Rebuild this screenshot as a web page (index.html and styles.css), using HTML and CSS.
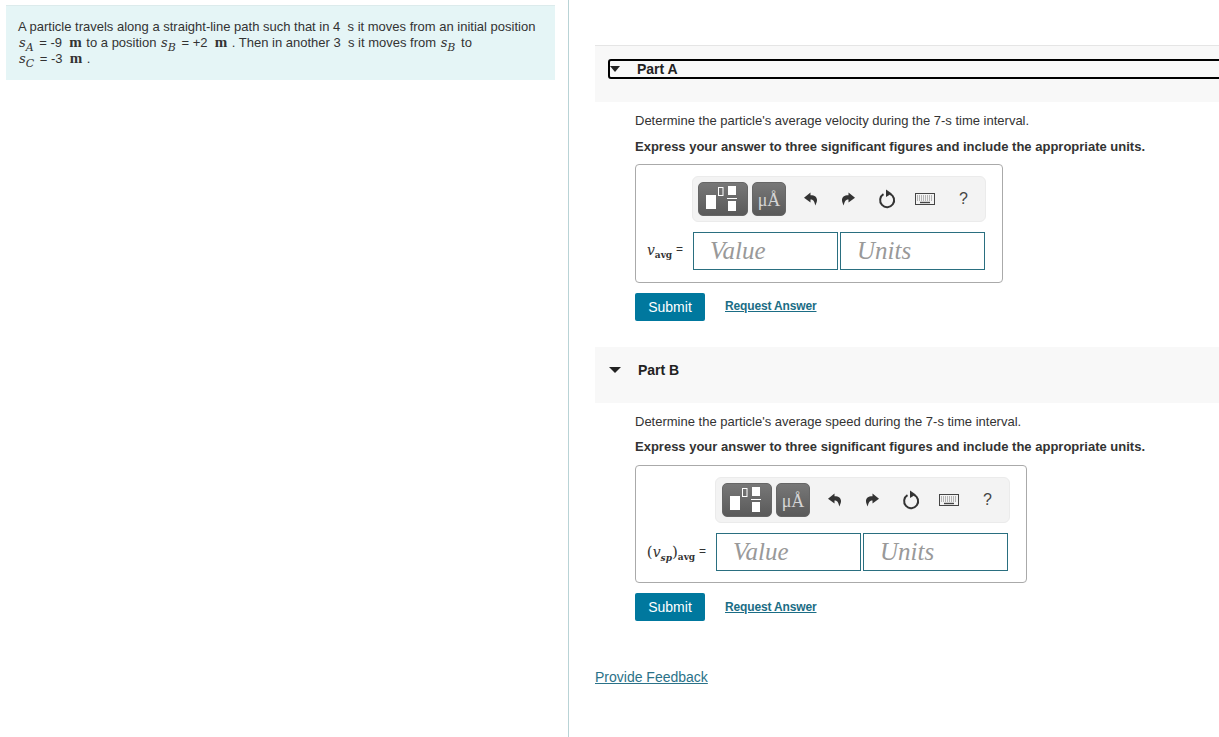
FILE: index.html
```html
<!DOCTYPE html>
<html lang="en">
<head>
    <meta charset="UTF-8">
    <meta name="viewport" content="width=device-width, initial-scale=1.0">
    <title>Particle velocity problem</title>
    <link rel="stylesheet" href="styles.css">
</head>
<body>
    <svg class="icon-defs" width="0" height="0">
        <symbol id="icon-undo" viewBox="0 0 14 14">
            <path d="M6.5 0.5 L0 5.8 L6.5 10.5 L6.5 7.6 C9 7.6 10.6 9.2 11.2 13.5 C14.5 8 13.5 3.2 6.5 3.2 Z" fill="#333"/>
        </symbol>
        <symbol id="icon-redo" viewBox="0 0 14 14">
            <path d="M7.5 0.5 L14 5.8 L7.5 10.5 L7.5 7.6 C5 7.6 3.4 9.2 2.8 13.5 C-0.5 8 0.5 3.2 7.5 3.2 Z" fill="#333"/>
        </symbol>
        <symbol id="icon-reset" viewBox="0 0 18 20">
            <path d="M5.5 5.2 A7 7 0 1 0 12 4.8" fill="none" stroke="#333" stroke-width="2"/>
            <path d="M8 0.5 L13.8 4.4 L8 8 Z" fill="#333"/>
        </symbol>
        <symbol id="icon-keyboard" viewBox="0 0 20 12">
            <rect x="0.5" y="0.5" width="19" height="11" fill="#f3f3f3" stroke="#444"/>
            <path d="M2 3 H18 M2 5 H18 M2 7 H18" stroke="#777" stroke-dasharray="1 1"/>
            <path d="M5 9.5 H15" stroke="#444" stroke-width="1.4"/>
        </symbol>
        <symbol id="icon-templates" viewBox="0 0 50 34">
            <rect x="8" y="13" width="10" height="14" fill="#fff"/>
            <rect x="20.5" y="5.5" width="4.5" height="8" fill="none" stroke="#fff"/>
            <rect x="30" y="4" width="8" height="9" fill="#fff"/>
            <rect x="29" y="16" width="10" height="1" fill="#fff"/>
            <rect x="30" y="19" width="8" height="10" fill="#fff"/>
        </symbol>
    </svg>

    <div class="layout">
        <div class="left-pane">
            <div class="problem">
                A particle travels along a straight-line path such that in 4 &nbsp;s it moves from an initial position<br>
                <span class="var">s<sub>A</sub></span> = -9 &nbsp;<span class="unit">m</span> to a position <span class="var">s<sub>B</sub></span> = +2 &nbsp;<span class="unit">m</span> . Then in another 3 &nbsp;s it moves from <span class="var">s<sub>B</sub></span> to<br>
                <span class="var">s<sub>C</sub></span> = -3 &nbsp;<span class="unit">m</span> .
            </div>
        </div>

        <div class="right-pane">
            <div class="part-header part-header-first">
                <div class="part-toggle part-toggle-focus">
                    <span class="arrow"></span>
                    <span class="part-title">Part A</span>
                </div>
            </div>
            <div class="part-body">
                <p class="question">Determine the particle's average velocity during the 7-s time interval.</p>
                <p class="instruction">Express your answer to three significant figures and include the appropriate units.</p>
                <div class="answer-box answer-a">
                    <div class="toolbar">
                        <button class="tool-btn tool-wide" type="button"><svg width="50" height="34"><use href="#icon-templates"/></svg></button>
                        <button class="tool-btn tool-units" type="button">μÅ</button>
                        <div class="tool-icons">
                            <svg width="14" height="14"><use href="#icon-undo"/></svg>
                            <svg width="14" height="14"><use href="#icon-redo"/></svg>
                            <svg width="18" height="20"><use href="#icon-reset"/></svg>
                            <svg class="tool-keyboard" width="20" height="12"><use href="#icon-keyboard"/></svg>
                            <span class="help">?</span>
                        </div>
                    </div>
                    <div class="answer-row">
                        <span class="answer-label"><span class="var">v</span><sub class="avg">avg</sub> <span class="eq">=</span></span>
                        <input class="answer-input" type="text" placeholder="Value">
                        <input class="answer-input" type="text" placeholder="Units">
                    </div>
                </div>
                <div class="actions">
                    <button class="submit-btn" type="button">Submit</button>
                    <a class="request-link" href="#">Request Answer</a>
                </div>
            </div>

            <div class="part-header">
                <div class="part-toggle">
                    <span class="arrow"></span>
                    <span class="part-title">Part B</span>
                </div>
            </div>
            <div class="part-body part-body-b">
                <p class="question">Determine the particle's average speed during the 7-s time interval.</p>
                <p class="instruction">Express your answer to three significant figures and include the appropriate units.</p>
                <div class="answer-box answer-b">
                    <div class="toolbar">
                        <button class="tool-btn tool-wide" type="button"><svg width="50" height="34"><use href="#icon-templates"/></svg></button>
                        <button class="tool-btn tool-units" type="button">μÅ</button>
                        <div class="tool-icons">
                            <svg width="14" height="14"><use href="#icon-undo"/></svg>
                            <svg width="14" height="14"><use href="#icon-redo"/></svg>
                            <svg width="18" height="20"><use href="#icon-reset"/></svg>
                            <svg class="tool-keyboard" width="20" height="12"><use href="#icon-keyboard"/></svg>
                            <span class="help">?</span>
                        </div>
                    </div>
                    <div class="answer-row">
                        <span class="answer-label"><span class="paren">(</span><span class="var">v<sub class="sp">sp</sub></span><span class="paren">)</span><sub class="avg">avg</sub> <span class="eq">=</span></span>
                        <input class="answer-input" type="text" placeholder="Value">
                        <input class="answer-input" type="text" placeholder="Units">
                    </div>
                </div>
                <div class="actions">
                    <button class="submit-btn" type="button">Submit</button>
                    <a class="request-link" href="#">Request Answer</a>
                </div>
            </div>

            <a class="feedback-link" href="#">Provide Feedback</a>
        </div>
    </div>
</body>
</html>
```

FILE: styles.css
```css
html, body {
    height: 100%;
}
body {
    margin: 0;
    overflow: hidden;
    font-family: "Liberation Sans", Arial, sans-serif;
    font-size: 13px;
    color: #333;
    background-color: white;
}
.icon-defs {
    position: absolute;
}
.layout {
    display: flex;
    height: 737px;
}
.left-pane {
    box-sizing: border-box;
    width: 569px;
    flex-shrink: 0;
    padding: 5px 13px 0 6px;
    border-right: 1px solid #b9d3d6;
}
.problem {
    box-sizing: border-box;
    height: 75px;
    padding: 13px 12px 0 12px;
    line-height: 16px;
    background-color: #e5f5f6;
    border-top: 1px solid #dcebec;
}
.var {
    margin: 0 2px 0 1px;
    font-family: "DejaVu Serif", serif;
    font-style: italic;
    font-size: 13px;
    line-height: 0;
}
.var sub {
    font-size: 11px;
    line-height: 0;
}
.unit {
    margin-right: 1px;
    font-family: "Liberation Serif", serif;
    font-weight: bold;
    font-size: 15px;
    line-height: 0;
}
.right-pane {
    flex: 1;
    min-width: 0;
    padding: 45px 0 0 26px;
}
.part-header {
    display: flex;
    box-sizing: border-box;
    height: 56px;
    padding: 13px 0 0 13px;
    background-color: #f8f8f8;
}
.part-header-first {
    height: 57px;
    border-top: 1px solid #e5e5e5;
}
.part-toggle {
    display: flex;
    flex: 1;
    align-items: center;
    box-sizing: border-box;
    height: 20px;
    margin-right: -6px;
    padding-left: 1px;
    font-weight: bold;
    font-size: 14px;
    color: #222;
}
.part-toggle-focus {
    border: 2px solid #000;
    border-radius: 3px;
    padding-left: 0;
}
.arrow {
    width: 0;
    height: 0;
    border-left: 6px solid transparent;
    border-right: 6px solid transparent;
    border-top: 6px solid #222;
}
.part-toggle-focus .arrow {
    border-left-width: 5px;
    border-right-width: 5px;
}
.part-title {
    margin-left: 17px;
}
.part-body {
    padding-left: 40px;
}
.question {
    margin: 0;
    padding-top: 10px;
    line-height: 17px;
}
.instruction {
    margin: 9px 0;
    line-height: 17px;
    font-weight: bold;
}
.part-body-b .instruction {
    margin: 8px 0 10px;
}
.answer-box {
    box-sizing: border-box;
    height: 119px;
    padding-top: 11px;
    border: 1px solid #aaa;
    border-radius: 4px;
}
.answer-a {
    width: 368px;
}
.answer-b {
    width: 392px;
    height: 118px;
}
.toolbar {
    display: flex;
    align-items: center;
    box-sizing: border-box;
    height: 46px;
    padding-left: 5px;
    background-color: #f3f3f3;
    border-radius: 6px;
    border: 1px solid #ebebeb;
}
.answer-a .toolbar {
    width: 294px;
    margin-left: 56px;
}
.answer-b .toolbar {
    width: 295px;
    margin-left: 79px;
    padding-left: 6px;
}
.tool-btn {
    box-sizing: border-box;
    height: 34px;
    padding: 3px 0 0;
    border: 1px solid #666;
    border-radius: 5px;
    background: linear-gradient(#777, #5a5a5a);
    color: #d5d5d5;
    font-family: "Liberation Serif", serif;
    font-size: 18px;
}
.tool-wide {
    width: 50px;
    padding: 0;
}
.tool-wide svg {
    display: block;
    margin: -1px;
}
.tool-units {
    width: 34px;
    margin-left: 4px;
}
.tool-icons {
    display: flex;
    align-items: center;
    gap: 23px;
    padding-left: 18px;
}
.tool-keyboard {
    margin-left: -4px;
}
.help {
    margin-left: 1px;
    font-size: 16px;
    color: #444;
}
.answer-row {
    display: flex;
    align-items: center;
    gap: 2px;
    margin-top: 10px;
}
.answer-label {
    box-sizing: border-box;
    padding-right: 8px;
    font-family: "DejaVu Serif", serif;
    font-size: 12px;
    text-align: right;
    white-space: nowrap;
}
.answer-a .answer-label {
    width: 55px;
}
.answer-b .answer-label {
    width: 78px;
}
.answer-label .var {
    margin: 0;
    font-size: 14px;
}
.answer-label .var sub.sp {
    font-size: 9px;
    font-weight: bold;
    line-height: 0;
}
.avg {
    font-size: 9px;
    font-weight: bold;
    line-height: 0;
    vertical-align: -3px;
}
.paren {
    font-size: 15px;
}
.eq {
    font-family: "Liberation Sans", sans-serif;
    font-size: 12px;
    position: relative;
    top: -2px;
}
.answer-input {
    box-sizing: border-box;
    width: 145px;
    height: 38px;
    padding: 0 16px;
    border: 1px solid #2a6f80;
    background-color: white;
    font-family: "Liberation Serif", serif;
    font-style: italic;
    font-size: 25px;
    outline: none;
}
.answer-input::placeholder {
    color: #999;
    opacity: 1;
}
.actions {
    display: flex;
    align-items: center;
    gap: 20px;
    margin-top: 10px;
}
.submit-btn {
    width: 70px;
    height: 28px;
    padding: 0;
    border: none;
    border-radius: 2px;
    background-color: #00789e;
    color: white;
    font-family: "Liberation Sans", sans-serif;
    font-size: 14px;
}
.request-link {
    font-size: 12px;
    font-weight: bold;
    letter-spacing: -0.15px;
    color: #1b6d85;
    position: relative;
    top: -1px;
}
.part-body-b .request-link {
    top: 0;
}
.part-body + .part-header {
    margin-top: 26px;
}
.feedback-link {
    display: inline-block;
    margin-top: 48px;
    font-size: 14px;
    color: #2b7288;
}
```
